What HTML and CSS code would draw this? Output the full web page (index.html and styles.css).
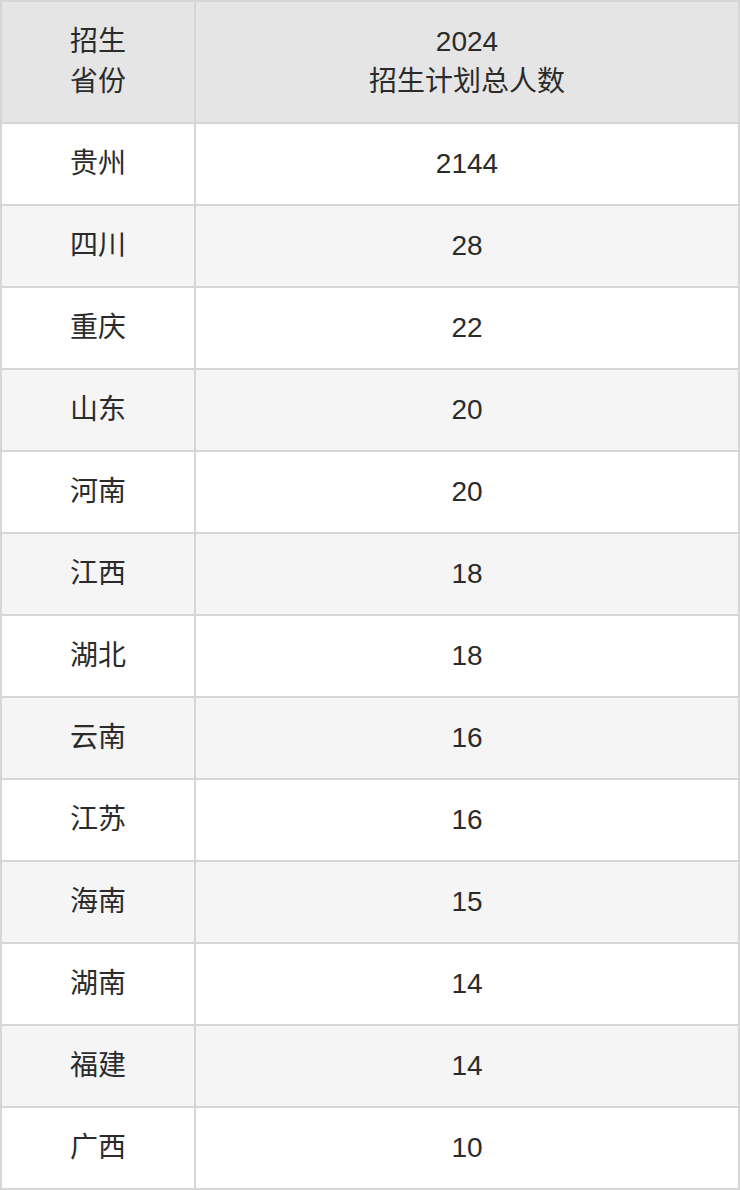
FILE: index.html
```html
<!DOCTYPE html>
<html lang="zh-CN">
<head>
<meta charset="utf-8">
<title>招生计划</title>
<link rel="stylesheet" href="styles.css">
</head>
<body>
<table class="plan">
  <colgroup><col class="c-prov"><col class="c-num"></colgroup>
  <thead>
    <tr><th>招生<br>省份</th><th>2024<br>招生计划总人数</th></tr>
  </thead>
  <tbody>
    <tr><td>贵州</td><td>2144</td></tr>
    <tr><td>四川</td><td>28</td></tr>
    <tr><td>重庆</td><td>22</td></tr>
    <tr><td>山东</td><td>20</td></tr>
    <tr><td>河南</td><td>20</td></tr>
    <tr><td>江西</td><td>18</td></tr>
    <tr><td>湖北</td><td>18</td></tr>
    <tr><td>云南</td><td>16</td></tr>
    <tr><td>江苏</td><td>16</td></tr>
    <tr><td>海南</td><td>15</td></tr>
    <tr><td>湖南</td><td>14</td></tr>
    <tr><td>福建</td><td>14</td></tr>
    <tr><td>广西</td><td>10</td></tr>
  </tbody>
</table>
</body>
</html>
```
FILE: styles.css
```css
html, body {
  margin: 0;
  padding: 0;
  background: #ffffff;
}
.plan {
  width: 740px;
  border-collapse: separate;
  border-spacing: 2px;
  background: #d6d6d6;
  table-layout: fixed;
  font-family: "Liberation Sans", "Noto Sans CJK SC", sans-serif;
  font-size: 28px;
  color: #2b2b2b;
}
.c-prov { width: 192px; }
.c-num { width: 542px; }
.plan th,
.plan td {
  padding: 0;
  text-align: center;
  vertical-align: middle;
  font-weight: normal;
}
.plan th {
  height: 120px;
  line-height: 40px;
  background: #e5e5e5;
}
.plan td {
  height: 80px;
  line-height: 40px;
  background: #ffffff;
}
.plan tbody tr:nth-child(even) td {
  background: #f5f5f5;
}
```
